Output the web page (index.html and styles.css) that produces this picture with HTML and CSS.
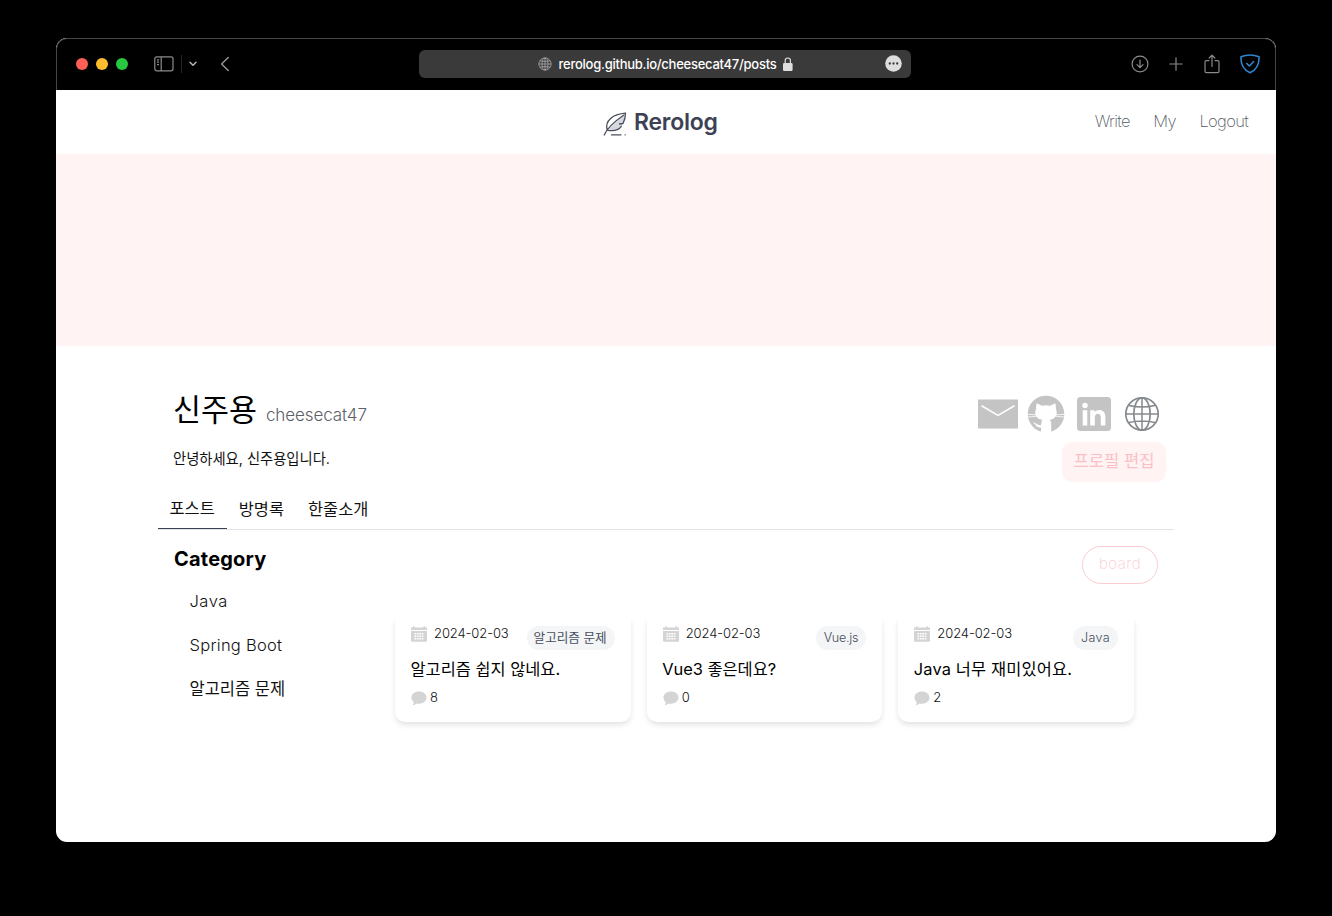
FILE: index.html
```html
<!DOCTYPE html>
<html lang="ko">
<head>
<meta charset="utf-8">
<title>Rerolog</title>
<link rel="stylesheet" href="styles.css">
</head>
<body>
<div class="window">
  <header class="toolbar">
    <div class="tools-left">
      <div class="lights"><i class="red"></i><i class="yellow"></i><i class="green"></i></div>
      <svg class="sidebar-icon" width="20" height="16" viewBox="0 0 20 16" fill="none" stroke="#8b8b8b" stroke-width="1.2"><rect x=".8" y=".8" width="18.2" height="14" rx="2"/><path d="M7.2 1v14M3 3.8h2M3 6.2h2M3 8.6h2"/></svg>
      <span class="divider"></span>
      <svg class="chevron" width="8" height="6" viewBox="0 0 8 6" fill="none" stroke="#b5b5b5" stroke-width="1.5" stroke-linecap="round" stroke-linejoin="round"><path d="M1 1.2l3 3 3-3"/></svg>
      <svg width="10" height="16" viewBox="0 0 10 16" fill="none" stroke="#999" stroke-width="1.4" stroke-linecap="round" stroke-linejoin="round"><path d="M8.2 1.6L1.6 8l6.6 6.4"/></svg>
    </div>
    <div class="address">
      <svg width="14" height="14" viewBox="0 0 14 14" fill="none" stroke="#a0a0a0" stroke-width=".9"><circle cx="7" cy="7" r="6.1"/><ellipse cx="7" cy="7" rx="3" ry="6.1"/><path d="M7 .9v12.2M.9 7h12.2M1.8 3.8q5.200 1.400 10.400 0M1.8 10.200q5.200-1.400 10.400 0"/></svg>
      <span class="url">rerolog.github.io/cheesecat47/posts</span>
      <svg width="10" height="14" viewBox="0 0 10 14"><rect y="6" width="9.600" height="8" rx="1.200" fill="#dedede"/><path d="M2.200 6.500V3.600a2.600 2.600 0 0 1 5.200 0v2.900" fill="none" stroke="#dedede" stroke-width="1.200"/></svg>
      <svg class="more" width="17" height="17" viewBox="0 0 17 17"><circle cx="8.500" cy="8.500" r="8.300" fill="#dedede"/><g fill="#3a3a3a"><circle cx="4.800" cy="8.500" r="1.150"/><circle cx="8.500" cy="8.500" r="1.150"/><circle cx="12.200" cy="8.500" r="1.150"/></g></svg>
    </div>
    <div class="tools-right">
      <svg width="18" height="18" viewBox="0 0 18 18" fill="none" stroke="#8b8b8b" stroke-width="1.200" stroke-linecap="round" stroke-linejoin="round"><circle cx="9" cy="9" r="7.900"/><path d="M9 5v7.500M6 9.700l3 3 3-3"/></svg>
      <svg width="14" height="14" viewBox="0 0 14 14" fill="none" stroke="#8b8b8b" stroke-width="1.200" stroke-linecap="round"><path d="M7 .8v12.400M.8 7h12.400"/></svg>
      <svg width="16" height="20" viewBox="0 0 16 20" fill="none" stroke="#8b8b8b" stroke-width="1.200" stroke-linecap="round" stroke-linejoin="round"><path d="M5 6.600H2.500Q1 6.600 1 8v9q0 1.600 1.500 1.600h11q1.500 0 1.500-1.600V8q0-1.400-1.500-1.400H11M8 12.500V1.200M5.200 4L8 1.200 10.800 4"/></svg>
      <svg width="20" height="20" viewBox="0 0 20 20" fill="none" stroke="#2f84d2" stroke-width="1.600" stroke-linecap="round" stroke-linejoin="round"><path d="M10 1Q14.500 1 19 2.800C19.400 10 16.500 15.600 10 18.800C3.500 15.600.6 10 1 2.800Q5.500 1 10 1z"/><path d="M6.800 9.500l2.600 2.500 4.200-4.500"/></svg>
    </div>
  </header>

  <nav class="nav">
    <a class="logo">
      <svg width="24" height="24" viewBox="0 0 24 24" fill="none" stroke="#4b4f59" stroke-width="1.300" stroke-linecap="round" stroke-linejoin="round"><path d="M22.200 1.500C22 7 20.500 10 19 12.500C16 18 10 19 4.800 18.300L21 3z" fill="#d5d8df" stroke="none"/><path d="M22.500 1.200C10 2.200 1.500 8.500 4.200 17.800M22.500 1.200C22.500 5 21.500 8.500 20 11.500L16.500 12M18.300 14.300C15 19 10.500 19.300 4.800 18.300M1.200 23C3 18.500 8 12 20.500 3.200M8.500 22.800h9.500M22 22.800h.2"/></svg>
      <span>Rerolog</span>
    </a>
    <div class="links"><a class="write">Write</a><a class="my">My</a><a class="logout">Logout</a></div>
  </nav>
  <div class="banner"></div>

  <main class="content">
    <section class="profile">
      <div class="identity">
        <h1><span class="name">신주용</span><span class="userid">cheesecat47</span></h1>
        <p class="bio">안녕하세요, 신주용입니다.</p>
      </div>
      <div class="actions">
        <div class="socials">
          <svg width="40" height="40" viewBox="0 0 40 40"><path d="M0 5.500h40v29H0z" fill="#c4c4c4"/><path d="M4 12l16 9.500L36 12" fill="none" stroke="#fff" stroke-width="1.500" stroke-linecap="round"/></svg>
          <svg width="40" height="40" viewBox="0 0 40 40"><circle cx="20" cy="20" r="18.300" fill="#c4c4c4"/><path d="M10.800 9.200l5 2.500q4.200-1 8.400 0l5-2.500q1.200 3 .6 5.600c2.600 5-.2 10.200-5.800 11l1.200 2.700V40H15v-6.500c-3.500.3-5-1.300-5.800-3.200l-2.400-1.700c3.400-.3 4.200 3.300 8.200 2.600l1-5.400C10.300 25 7.600 19.800 10.200 14.800q-.6-2.600.6-5.600z" fill="#fff"/><path d="M1.500 20.300l9 .6M1.500 23l9-.7M29.500 20.900l9-.6M29.500 22.300l9 .7" stroke="#fff" stroke-width=".8"/></svg>
          <svg width="40" height="40" viewBox="0 0 40 40"><rect x="3" y="3" width="34" height="34" rx="3.500" fill="#c4c4c4"/><g fill="#fff"><circle cx="11" cy="11.500" r="2.700"/><path d="M8.700 16.200h4.600v15.300H8.700zM16.200 16.200h4.400v2c3-4 10.800-3 10.800 4.300v9h-4.600v-8.300c0-5-6-4.500-6 0v8.300h-4.600z"/></g></svg>
          <svg width="40" height="40" viewBox="0 0 40 40" fill="none" stroke="#868a8f" stroke-width="1.700"><circle cx="20" cy="20" r="16.200"/><ellipse cx="20" cy="20" rx="8.200" ry="16.200"/><path d="M20 3.800v32.400M3.800 20h32.400M7 11.500q13 3 26 0M7 28.500q13-3 26 0" stroke-width="1.500"/></svg>
        </div>
        <button class="edit">프로필 편집</button>
      </div>
    </section>
    <div class="tabs"><a class="active">포스트</a><a>방명록</a><a>한줄소개</a></div>
    <section class="board-area">
      <aside class="category">
        <h2>Category</h2>
        <ul><li class="c-java">Java</li><li class="c-spring">Spring Boot</li><li class="c-algo">알고리즘 문제</li></ul>
      </aside>
      <div class="posts">
        <button class="board">board</button>
        <div class="cards">
          <article class="card">
            <div class="meta"><svg width="16" height="16" viewBox="0 0 16 16"><path d="M0 1.500h2V.3h1.500v1.200h9V.3H14v1.200h2V4H0zM0 5h16v9.500q0 1.300-1.300 1.300H1.300Q0 15.800 0 14.500z" fill="#d4d4d4"/><path d="M3.500 7.800h9M3.500 10.300h9M3.500 12.800h9" stroke="#fff" stroke-width="1.500" stroke-dasharray="1.700 .7"/></svg><time>2024-02-03</time><span class="tag">알고리즘 문제</span></div>
            <h3>알고리즘 쉽지 않네요.</h3>
            <div class="comments"><svg width="16" height="15" viewBox="0 0 16 15"><path d="M8 .5c4.300 0 7.500 2.600 7.500 6s-3.200 6.200-7.500 6.200q-1.200 0-2.300-.3Q4 14 1.500 14.200 3 12.700 2.700 11.200 .4 9.300.4 6.500C.4 3.100 3.700.5 8 .5z" fill="#d4d4d4"/></svg><span>8</span></div>
          </article>
          <article class="card">
            <div class="meta"><svg width="16" height="16" viewBox="0 0 16 16"><path d="M0 1.500h2V.3h1.500v1.200h9V.3H14v1.200h2V4H0zM0 5h16v9.500q0 1.300-1.300 1.300H1.300Q0 15.800 0 14.500z" fill="#d4d4d4"/><path d="M3.500 7.800h9M3.500 10.300h9M3.500 12.800h9" stroke="#fff" stroke-width="1.500" stroke-dasharray="1.700 .7"/></svg><time>2024-02-03</time><span class="tag tag-latin">Vue.js</span></div>
            <h3>Vue3 좋은데요?</h3>
            <div class="comments"><svg width="16" height="15" viewBox="0 0 16 15"><path d="M8 .5c4.300 0 7.500 2.600 7.500 6s-3.200 6.200-7.500 6.200q-1.200 0-2.300-.3Q4 14 1.500 14.200 3 12.700 2.700 11.200 .4 9.300.4 6.500C.4 3.100 3.700.5 8 .5z" fill="#d4d4d4"/></svg><span>0</span></div>
          </article>
          <article class="card">
            <div class="meta"><svg width="16" height="16" viewBox="0 0 16 16"><path d="M0 1.500h2V.3h1.500v1.200h9V.3H14v1.200h2V4H0zM0 5h16v9.500q0 1.300-1.300 1.300H1.300Q0 15.800 0 14.500z" fill="#d4d4d4"/><path d="M3.500 7.800h9M3.500 10.300h9M3.500 12.800h9" stroke="#fff" stroke-width="1.500" stroke-dasharray="1.700 .7"/></svg><time>2024-02-03</time><span class="tag tag-java">Java</span></div>
            <h3 class="java-title">Java 너무 재미있어요.</h3>
            <div class="comments"><svg width="16" height="15" viewBox="0 0 16 15"><path d="M8 .5c4.300 0 7.500 2.600 7.500 6s-3.200 6.200-7.500 6.200q-1.200 0-2.300-.3Q4 14 1.500 14.200 3 12.700 2.700 11.200 .4 9.300.4 6.500C.4 3.100 3.700.5 8 .5z" fill="#d4d4d4"/></svg><span>2</span></div>
          </article>
        </div>
      </div>
    </section>
  </main>
</div>
</body>
</html>
```
FILE: styles.css
```css
* { box-sizing: border-box; margin: 0; padding: 0; }
body {
  width: 1332px; height: 916px; padding: 38px 56px; overflow: hidden;
  background: #000; color: #111;
  font-family: Inter, "Noto Sans CJK KR", sans-serif; font-weight: 300;
}
h1, h2, h3 { font-weight: inherit; }
svg { display: block; flex: none; }
button { font: inherit; }
.window { width: 1220px; height: 804px; border-radius: 11px; background: #fff; overflow: hidden; }

.toolbar {
  display: grid; grid-template-columns: 1fr 492px 1fr; align-items: center;
  height: 52px; padding: 0 18px 2px 19px;
  background: #000; border: 1px solid #454545; border-bottom: 0; border-radius: 11px 11px 0 0;
}
.tools-left { display: flex; align-items: center; }
.lights { display: flex; gap: 8px; }
.lights i { width: 12px; height: 12px; border-radius: 50%; }
.red { background: #ff5f57; }
.yellow { background: #febc2e; }
.green { background: #28c840; }
.sidebar-icon { margin-left: 26px; }
.divider { width: 1px; height: 18px; margin-left: 7px; background: #242424; }
.chevron { margin: 1px 23px 0 7px; }
.address {
  position: relative; display: flex; align-items: center; justify-content: center; gap: 7px;
  height: 28px; margin-left: -2px; margin-right: 2px; padding-left: 2px; border-radius: 6px; background: #3a3a3a;
}
.url { color: #fff; font-size: 13px; font-weight: 500; line-height: 28px; letter-spacing: -.26px; white-space: nowrap; }
.more { position: absolute; right: 9px; top: 5px; }
.tools-right { display: flex; align-items: center; justify-content: flex-end; gap: 20.500px; margin-right: -3px; }

.nav { display: flex; align-items: center; height: 64px; }
.logo { display: flex; align-items: center; gap: 7px; margin-left: 547px; padding-top: 3px; color: #3c4254; font-size: 23px; font-weight: 600; letter-spacing: -.25px; }
.logo span { line-height: 28px; padding-bottom: 3px; }
.links { display: flex; gap: 23.500px; margin-left: auto; margin-right: 28px; padding-bottom: 3px; color: #555a63; font-size: 16.500px; font-weight: 200; letter-spacing: -.65px; }
.banner { height: 192px; background: #fff3f3; }

.content { width: 1016px; margin: 0 auto; }
.profile { display: flex; justify-content: space-between; height: 147px; padding: 48px 8px 0 15px; }
.profile h1 { display: flex; align-items: baseline; gap: 9px; height: 45px; line-height: 33px; }
.name { font-size: 30.400px; font-weight: 400; color: #000; }
.userid { font-size: 17px; color: #5c6068; letter-spacing: -.08px; }
.bio { padding-top: 9px; font-size: 14.300px; font-weight: 400; line-height: 22px; }
.actions { display: flex; flex-direction: column; align-items: flex-end; }
.socials { display: flex; gap: 8px; margin-right: 4px; }
.edit { width: 104px; height: 40px; margin-top: 8px; padding-bottom: 4px; border: 0; border-radius: 10px; background: #fff3f3; color: #fbc0c6; font-size: 16.600px; font-weight: 400; }
.tabs { display: flex; height: 37px; border-bottom: 1px solid #e2e4e8; }
.tabs a { height: 37px; padding: 0 12px; line-height: 32px; font-size: 16.400px; font-weight: 400; white-space: nowrap; }
.tabs .active { height: 36px; padding-left: 11.500px; line-height: 31px; border-bottom: 1px solid #3c4254; }

.board-area { display: flex; padding: 16px 16px 0; }
.category { width: 213px; }
.category h2 { color: #000; font-size: 20px; font-weight: 700; line-height: 26px; letter-spacing: .2px; }
.category ul { list-style: none; padding: 7px 16px 0 15.500px; }
.category li { height: 44px; line-height: 44px; font-size: 16.500px; }
.category .c-java { letter-spacing: .5px; }
.category .c-spring { letter-spacing: .27px; }
.category .c-algo { line-height: 45px; font-weight: 400; }
.posts { flex: 1; }
.board { display: block; width: 76px; height: 38px; margin-left: auto; padding-bottom: 3px; border: 1px solid #fbcdd2; border-radius: 19px; background: #fff; color: #fbcdd2; font-size: 15px; font-weight: 200; letter-spacing: .5px; }
.cards { display: grid; grid-template-columns: repeat(3, 1fr); gap: 16px; margin-top: 34px; padding: 0 24px 10px 8px; clip-path: inset(0); }
.card { height: 104px; padding: 8px 16px 0; border-radius: 0 0 10px 10px; background: #fff; box-shadow: 0 3px 6px -1px rgba(0, 0, 0, .14); }
.meta { display: flex; height: 34px; }
.meta time { margin-left: 7px; line-height: 15px; font-size: 13px; letter-spacing: -.1px; }
.tag { height: 24px; margin-left: auto; padding: 0 8px 0 7px; border-radius: 12px; background: #f3f5f7; color: #474e5c; font-size: 12.600px; font-weight: 400; line-height: 23px; }
.tag-latin, .tag-java { padding-left: 8px; font-weight: 300; }
.tag-latin { letter-spacing: -.25px; }
.tag-java { letter-spacing: .35px; }
.card h3 { margin-left: -.5px; color: #000; font-size: 16.400px; font-weight: 400; line-height: 18px; white-space: nowrap; }
.card .java-title { letter-spacing: .15px; }
.comments { display: flex; gap: 3px; padding-top: 13px; font-size: 13px; line-height: 13px; }
```
